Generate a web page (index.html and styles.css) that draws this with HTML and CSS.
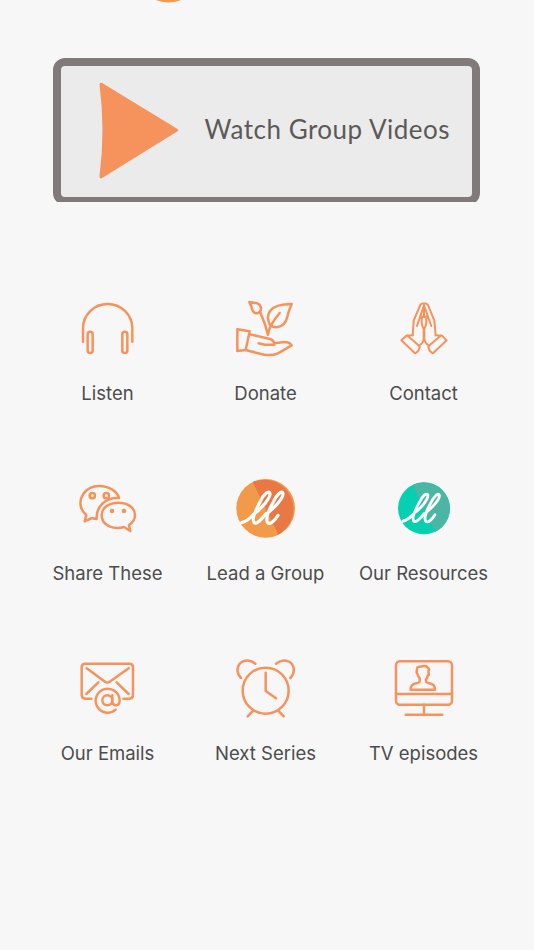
FILE: index.html
```html
<!DOCTYPE html>
<html lang="en">
<head>
  <meta charset="UTF-8" />
  <meta name="viewport" content="width=device-width, initial-scale=1.0"/>
  <title>Group Videos</title>
  <link rel="stylesheet" href="styles.css">
</head>
<body>

  <header class="top">
    <svg class="logo-edge" viewBox="0 0 30 3"><ellipse cx="15.5" cy="-6" rx="18" ry="8.5"/></svg>
  </header>

  <div class="banner">
    <a class="watch">
      <svg class="play" viewBox="0 0 240 292"><path d="M1 7Q1 0 9 3L235 141Q241 145 235 149L9 289Q1 293 1 284Q19 145 1 7Z"/></svg>
      <span class="watch-text">Watch Group Videos</span>
    </a>
  </div>

  <main class="menu">
    <a class="item">
      <svg class="icon" viewBox="0 0 225 225">
        <path d="M39 155V115A74 73 0 0 1 187 115V155"/>
        <rect x="53" y="125" width="15" height="64" rx="7.5"/>
        <rect x="157" y="125" width="15" height="64" rx="7.5"/>
      </svg>
      <span class="label">Listen</span>
    </a>
    <a class="item">
      <svg class="icon" viewBox="3 0 225 225">
        <path d="M31 118L68 124L56 180L31 183Z"/>
        <path d="M68 133L129 147Q142 151 142 164H114L95 160"/>
        <path d="M142 160L172 156Q188 156 194 166L153 190Q134 198 112 194L58 181"/>
        <path d="M67 36L91 40Q103 45 102 57Q101 68 91 70Q78 70 75 57Q73 46 67 36Z"/>
        <path d="M99 65Q115 100 123 134Q127 105 158 69"/>
        <path d="M129 105Q117 82 129 63Q144 42 194 42Q184 66 181 80Q175 108 149 112Q137 112 129 105Z"/>
      </svg>
      <span class="label">Donate</span>
    </a>
    <a class="item">
      <svg class="icon thin" viewBox="0 0 225 225">
        <path d="M114 41Q106 39 103 45L83 92L80 136"/>
        <path d="M114 41Q122 39 126 45L145 92L149 136"/>
        <path d="M114 43V80M113 49L93 108M115 49L136 108"/>
        <path d="M102 83Q106 77 114 81Q123 77 126 83M108 81Q104 100 113 117V151M120 81Q124 100 115 117V151"/>
        <path d="M80 136L61 137L46 151L87 190Q101 184 101 169L63 136"/>
        <path d="M149 136L168 137L182 151L141 190Q128 184 127 169L166 136"/>
        <path d="M98 167Q112 161 114 145Q117 161 130 167"/>
      </svg>
      <span class="label">Contact</span>
    </a>
    <a class="item">
      <svg class="icon" viewBox="0 0 225 225">
        <path d="M80 147Q75 147 66 144L44 154L49 135C29 120 26 91 40 72C53 53 70 48 87 48C115 48 142 63 147 84C110 81 77 108 80 147Z"/>
        <circle cx="67" cy="77" r="8"/>
        <circle cx="109" cy="77" r="8"/>
        <path d="M181 183L162 171C134 179 95 169 95 136C95 112 118 98 145 98C173 98 195 113 195 136C195 149 187 159 177 165Z"/>
        <circle class="dot" cx="126" cy="123" r="7"/>
        <circle class="dot" cx="162" cy="123" r="7"/>
      </svg>
      <span class="label">Share These</span>
    </a>
    <a class="item">
      <svg class="icon badge" viewBox="3 0 225 225">
        <circle class="badge-light" cx="116" cy="115" r="88"/>
        <path class="badge-dark" d="M77 36A88 88 0 0 1 154 194Z"/>
        <g id="script-ll">
          <path class="tail" d="M44 158Q62 153 78 135"/>
          <path d="M80 133C103 116 131 84 129 70C126 59 110 72 100 94C87 118 74 148 81 157C88 165 104 148 116 132"/>
          <path d="M119 131C143 113 170 84 168 70C165 59 149 74 139 96C126 118 114 148 122 158C130 166 145 149 153 136"/>
        </g>
      </svg>
      <span class="label">Lead a Group</span>
    </a>
    <a class="item">
      <svg class="icon badge teal" viewBox="0 0 225 225">
        <circle class="badge-light" cx="114" cy="115" r="78"/>
        <path class="badge-dark" d="M80 45A78 78 0 0 1 147 186Z"/>
        <use href="#script-ll" transform="translate(11.5 14) scale(.885)"/>
      </svg>
      <span class="label">Our Resources</span>
    </a>
    <a class="item">
      <svg class="icon" viewBox="0 0 225 225">
        <path d="M64 146H46Q35 146 35 135V52Q35 41 46 41H178Q189 41 189 52V135Q189 146 178 146H160"/>
        <path d="M50 55L105 95Q112 100 119 95L176 55M85 97L49 132M140 97L176 132"/>
        <circle cx="112" cy="151" r="15"/>
        <path d="M127 136V155Q128 166 138 166Q149 166 149 151A36 36 0 1 0 137 179"/>
      </svg>
      <span class="label">Our Emails</span>
    </a>
    <a class="item">
      <svg class="icon" viewBox="3 0 225 225">
        <circle cx="116" cy="122" r="69"/>
        <path d="M116 68V123L147 145M79 181L62 199M153 181L170 199"/>
        <path d="M42 84C26 68 29 42 48 34Q67 26 85 41M190 84C206 68 203 42 184 34Q165 26 147 41"/>
      </svg>
      <span class="label">Next Series</span>
    </a>
    <a class="item">
      <svg class="icon" viewBox="0 0 225 225">
        <rect x="30" y="34" width="168" height="130" rx="12"/>
        <path d="M30 132H198M114 164V194M59 194H169"/>
        <path d="M74 119Q74 104 86 101Q101 99 101 94V85Q95 78 94 71Q90 67 93 61Q91 49 103 50Q123 43 129 58L127 66Q131 73 125 78Q124 85 120 88V94Q120 99 135 101Q147 104 147 119Z"/>
      </svg>
      <span class="label">TV episodes</span>
    </a>
  </main>

</body>
</html>
```

FILE: styles.css
```css
* {
  box-sizing: border-box;
}

body {
  margin: 0;
  height: 950px;
  background: #f7f7f7;
  font-family: Inter, sans-serif;
  color: #4c4c4c;
  overflow: hidden;
}

.top {
  height: 57.5px;
  padding-left: 153px;
}

.logo-edge {
  display: block;
  width: 30px;
  height: 3px;
  fill: #f79848;
}

.banner {
  width: 427.4px;
  height: 144px;
  margin-left: 52.6px;
  overflow: hidden;
}

.watch {
  display: flex;
  align-items: center;
  height: 147px;
  padding-left: 38px;
  border: 8px solid #807b7a;
  border-radius: 12px;
  background: #ebebeb;
}

.play {
  flex-shrink: 0;
  width: 80px;
  height: 97px;
  margin-top: -1px;
  fill: #f6935c;
}

.watch-text {
  margin-left: 26px;
  margin-top: -5px;
  font-family: Lato, sans-serif;
  font-size: 26px;
  letter-spacing: 0.5px;
  color: #5b5a59;
  white-space: nowrap;
}

.menu {
  display: grid;
  grid-template-columns: repeat(3, 158px);
  grid-auto-rows: 180px;
  justify-content: center;
  margin-top: 88.5px;
  margin-right: 3px;
}

.item {
  display: flex;
  flex-direction: column;
  align-items: center;
}

.icon {
  width: 75px;
  height: 75px;
  fill: none;
  stroke: #f6935c;
  stroke-width: 7.5;
  stroke-linecap: round;
  stroke-linejoin: round;
}

.thin {
  stroke-width: 6;
}

.dot {
  fill: #f6935c;
  stroke: none;
}

.badge {
  stroke: #fff;
  stroke-width: 9.5;
}

.tail {
  stroke-width: 10;
}

.badge-light {
  fill: #f39a4a;
  stroke: none;
}

.badge-dark {
  fill: #e87945;
  stroke: none;
}

.teal .badge-light {
  fill: #06d0b1;
}

.teal .badge-dark {
  fill: #4ab6a3;
}

.label {
  margin-top: 15.5px;
  font-size: 18.5px;
  line-height: 24px;
  white-space: nowrap;
}
```
